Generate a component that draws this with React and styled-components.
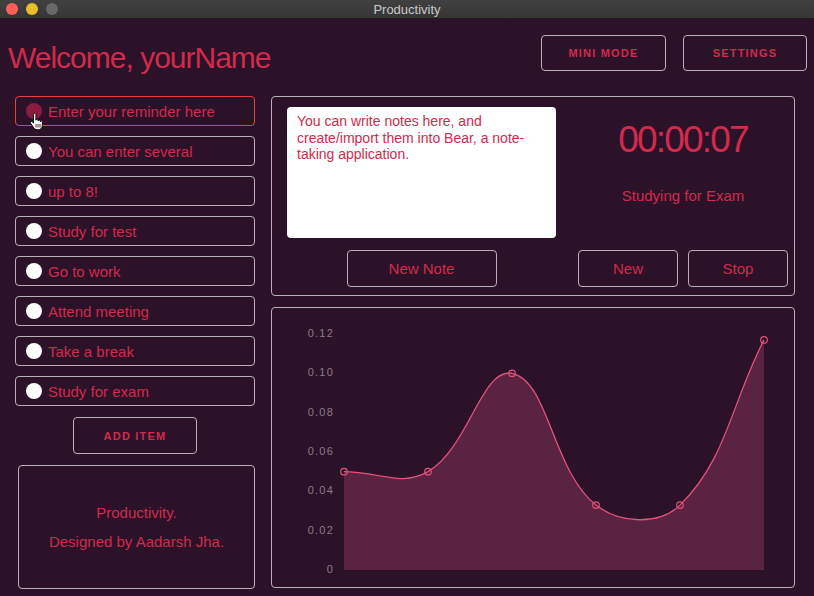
import React from "react";
import styled, { createGlobalStyle } from "styled-components";

const CRIMSON = "#d02a4c";
const LINE = "#b9b1b7";

const GlobalStyle = createGlobalStyle`
  html, body {
    margin: 0;
    padding: 0;
    background: #2c1229;
  }
  * {
    box-sizing: border-box;
  }
`;

const Window = styled.div`
  width: 814px;
  height: 596px;
  background: #2c1229;
  font-family: "Liberation Sans", Arial, sans-serif;
  color: ${CRIMSON};
  overflow: hidden;
`;

const TitleBar = styled.div`
  position: relative;
  height: 19px;
  display: flex;
  align-items: center;
  justify-content: center;
  background: linear-gradient(#404040, #363636);
  border-bottom: 1px solid #1c1c1c;
  color: #c9c9c9;
  font-size: 13px;
`;

const Lights = styled.div`
  position: absolute;
  left: 6px;
  top: 3px;
  display: flex;
  gap: 8px;
`;

const Light = styled.span`
  width: 12px;
  height: 12px;
  border-radius: 50%;
  background: ${(p) => p.$color};
`;

const Header = styled.div`
  height: 52px;
  display: flex;
  justify-content: space-between;
  align-items: flex-start;
  padding: 16px 7px 0 8px;
`;

const Welcome = styled.h1`
  margin: 6px 0 0;
  font-size: 30px;
  line-height: 30px;
  font-weight: 400;
  letter-spacing: -1px;
  padding-top: 2px;
`;

const HeaderButtons = styled.div`
  display: flex;
  gap: 17px;
`;

const CapsButton = styled.button`
  width: ${(p) => p.$width}px;
  height: ${(p) => p.$height || 36}px;
  background: transparent;
  border: 1px solid ${LINE};
  border-radius: 4px;
  color: ${CRIMSON};
  font-family: inherit;
  font-size: 11px;
  font-weight: 700;
  letter-spacing: 1.2px;
  cursor: pointer;
`;

const Main = styled.div`
  display: flex;
  gap: 16px;
  padding: 25px 19px 0 15px;
`;

const LeftColumn = styled.div`
  width: 240px;
  display: flex;
  flex-direction: column;
  align-items: center;
`;

const ReminderList = styled.div`
  width: 100%;
  display: flex;
  flex-direction: column;
  gap: 10px;
`;

const Reminder = styled.div`
  position: relative;
  height: 30px;
  display: flex;
  align-items: center;
  gap: 6px;
  padding-left: 10px;
  border: 1px solid ${(p) => (p.$active ? "#e2453f" : LINE)};
  border-radius: 4px;
  font-size: 15px;
`;

const Dot = styled.span`
  width: 16px;
  height: 16px;
  border-radius: 50%;
  flex-shrink: 0;
  background: ${(p) => (p.$active ? "#8a1c40" : "#fff")};
`;

const Cursor = styled.svg`
  position: absolute;
  left: 12px;
  top: 16px;
`;

const AddItem = styled(CapsButton)`
  margin-top: 11px;
`;

const Credits = styled.div`
  align-self: stretch;
  margin: 11px 0 0 3px;
  height: 124px;
  border: 1px solid ${LINE};
  border-radius: 4px;
  display: flex;
  flex-direction: column;
  align-items: center;
  justify-content: center;
  gap: 11px;
  font-size: 15px;
  line-height: 18px;
`;

const RightColumn = styled.div`
  flex: 1;
  display: flex;
  flex-direction: column;
  gap: 11px;
`;

const Panel = styled.div`
  border: 1px solid ${LINE};
  border-radius: 4px;
`;

const TopPanel = styled(Panel)`
  height: 200px;
  display: grid;
  grid-template-columns: 269px 210px;
  grid-template-rows: 1fr 37px;
  column-gap: 22px;
  row-gap: 12px;
  padding: 10px 6px 8px 15px;
`;

const Notes = styled.div`
  background: #fff;
  border-radius: 4px;
  padding: 6px 10px;
  font-size: 14px;
  line-height: 16.5px;
  color: ${CRIMSON};
`;

const TimerBlock = styled.div`
  display: flex;
  flex-direction: column;
  align-items: center;
`;

const Timer = styled.div`
  margin-top: 11px;
  font-size: 37px;
  line-height: 44px;
  letter-spacing: -1.8px;
`;

const Activity = styled.div`
  margin-top: 25px;
  font-size: 15px;
  line-height: 18px;
`;

const Actions = styled.div`
  display: flex;
  justify-content: ${(p) => p.$justify || "space-between"};
`;

const PlainButton = styled.button`
  width: ${(p) => p.$width}px;
  height: 37px;
  background: transparent;
  border: 1px solid ${LINE};
  border-radius: 4px;
  color: ${CRIMSON};
  font-family: inherit;
  font-size: 15px;
  cursor: pointer;
`;

const ChartPanel = styled(Panel)`
  height: 281px;
  overflow: hidden;
`;

const ChartSvg = styled.svg`
  display: block;
  width: 100%;
  height: 100%;
`;

const reminders = [
  "Enter your reminder here",
  "You can enter several",
  "up to 8!",
  "Study for test",
  "Go to work",
  "Attend meeting",
  "Take a break",
  "Study for exam",
];

const data = [0.05, 0.05, 0.1, 0.033, 0.033, 0.117];
const ticks = ["0.12", "0.10", "0.08", "0.06", "0.04", "0.02", "0"];
const BASE = 262;
const TOP = 26;
const yFor = (v) => BASE - (v / 0.12) * (BASE - TOP);

function splinePath(pts, t = 0.4) {
  const cps = pts.map((p, i) => {
    const p0 = pts[i - 1] || p;
    const p2 = pts[i + 1] || p;
    const d01 = Math.hypot(p.x - p0.x, p.y - p0.y);
    const d12 = Math.hypot(p2.x - p.x, p2.y - p.y);
    const sum = d01 + d12 || 1;
    const fa = (t * d01) / sum;
    const fb = (t * d12) / sum;
    return {
      prev: { x: p.x - fa * (p2.x - p0.x), y: p.y - fa * (p2.y - p0.y) },
      next: { x: p.x + fb * (p2.x - p0.x), y: p.y + fb * (p2.y - p0.y) },
    };
  });
  let d = `M${pts[0].x} ${pts[0].y}`;
  for (let i = 1; i < pts.length; i++) {
    const a = cps[i - 1].next;
    const b = cps[i].prev;
    d += ` C${a.x} ${a.y} ${b.x} ${b.y} ${pts[i].x} ${pts[i].y}`;
  }
  return d;
}

const Chart = () => {
  const pts = data.map((v, i) => ({ x: 72 + i * 84, y: yFor(v) }));
  const line = splinePath(pts);
  const area = `${line} L${pts[pts.length - 1].x} ${BASE} L${pts[0].x} ${BASE} Z`;

  return (
    <ChartSvg viewBox="0 0 522 279">
      {ticks.map((label, i) => (
        <text
          key={label}
          x="62"
          y={TOP + i * ((BASE - TOP) / 6)}
          textAnchor="end"
          dominantBaseline="middle"
          fill="#8a7b87"
          fontSize="11"
          letterSpacing="1.2"
          fontFamily="Liberation Sans, Arial, sans-serif"
        >
          {label}
        </text>
      ))}
      <path d={area} fill="#5a2341" />
      <line x1="72" y1={BASE + 0.5} x2="492" y2={BASE + 0.5} stroke="#24101f" />
      <path d={line} fill="none" stroke="#e4507a" strokeWidth="1.3" />
      {pts.map((p, i) => (
        <circle key={i} cx={p.x} cy={p.y} r="3.3" fill="none" stroke="#e4507a" strokeWidth="1.2" />
      ))}
    </ChartSvg>
  );
};

const HandCursor = () => (
  <Cursor width="16" height="18" viewBox="0 0 16 18">
    <path
      d="M5.5 1.6c0-.8.6-1.3 1.2-1.3s1.2.5 1.2 1.3v5.6c0-.7.5-1.1 1.1-1.1s1.1.4 1.1 1.1v.8c0-.7.5-1.1 1.1-1.1s1.1.4 1.1 1.1v.8c0-.6.5-1 1-1s1 .4 1 1v3.7c0 2.4-1.7 4.2-4 4.2H9c-1.4 0-2.4-.6-3.2-1.7L2.7 10.3c-.4-.6-.3-1.3.2-1.6.5-.4 1.2-.3 1.6.2l1 1.3V1.6z"
      fill="#fff"
      stroke="#000"
      strokeWidth="0.9"
    />
    <path d="M8 11v3.5M10 11v3.5M12 11v3.5" stroke="#000" strokeWidth="0.8" />
  </Cursor>
);

const App = () => {
  return (
    <Window>
      <GlobalStyle />
      <TitleBar>
        <Lights>
          <Light $color="#fe5f57" />
          <Light $color="#e6bf2b" />
          <Light $color="#686868" />
        </Lights>
        Productivity
      </TitleBar>

      <Header>
        <Welcome>Welcome, yourName</Welcome>
        <HeaderButtons>
          <CapsButton $width={125}>MINI MODE</CapsButton>
          <CapsButton $width={124}>SETTINGS</CapsButton>
        </HeaderButtons>
      </Header>

      <Main>
        <LeftColumn>
          <ReminderList>
            {reminders.map((text, i) => (
              <Reminder key={text} $active={i === 0}>
                <Dot $active={i === 0} />
                {text}
                {i === 0 && <HandCursor />}
              </Reminder>
            ))}
          </ReminderList>
          <AddItem $width={124} $height={37}>
            ADD ITEM
          </AddItem>
          <Credits>
            <div>Productivity.</div>
            <div>Designed by Aadarsh Jha.</div>
          </Credits>
        </LeftColumn>

        <RightColumn>
          <TopPanel>
            <Notes>
              You can write notes here, and create/import them into Bear, a
              note-taking application.
            </Notes>
            <TimerBlock>
              <Timer>00:00:07</Timer>
              <Activity>Studying for Exam</Activity>
            </TimerBlock>
            <Actions $justify="center">
              <PlainButton $width={150}>New Note</PlainButton>
            </Actions>
            <Actions>
              <PlainButton $width={100}>New</PlainButton>
              <PlainButton $width={100}>Stop</PlainButton>
            </Actions>
          </TopPanel>

          <ChartPanel>
            <Chart />
          </ChartPanel>
        </RightColumn>
      </Main>
    </Window>
  );
};

export default App;
